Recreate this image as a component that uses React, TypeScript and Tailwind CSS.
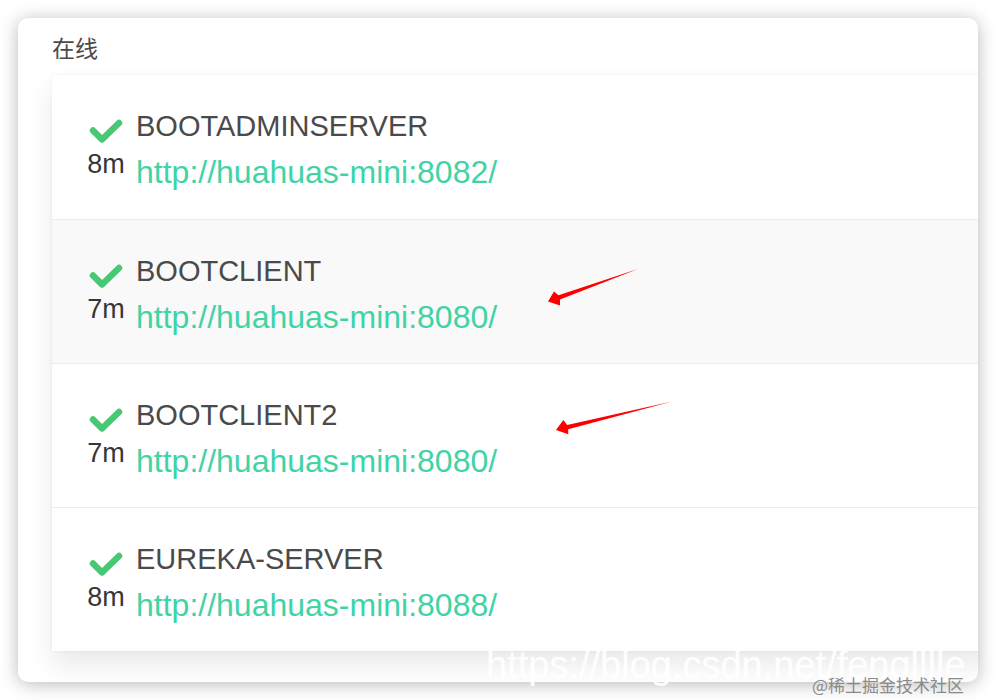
import React from 'react';

interface Instance {
  name: string;
  uptime: string;
  url: string;
}

const instances: Instance[] = [
  { name: 'BOOTADMINSERVER', uptime: '8m', url: 'http://huahuas-mini:8082/' },
  { name: 'BOOTCLIENT', uptime: '7m', url: 'http://huahuas-mini:8080/' },
  { name: 'BOOTCLIENT2', uptime: '7m', url: 'http://huahuas-mini:8080/' },
  { name: 'EUREKA-SERVER', uptime: '8m', url: 'http://huahuas-mini:8088/' },
];

const CheckIcon = () => (
  <svg width="36" height="28" viewBox="0 0 36 28" className="block">
    <polyline
      points="5,12.5 14,21.5 31,5"
      fill="none"
      stroke="#48c774"
      strokeWidth="6.5"
      strokeLinecap="round"
      strokeLinejoin="round"
    />
  </svg>
);

const InstanceRow: React.FC<{ item: Instance; highlighted: boolean; first: boolean }> = ({ item, highlighted, first }) => (
  <div
    className={`flex h-[144px] pl-[34px] pt-[33px] ${first ? '' : 'border-t border-[#ededed]'} ${highlighted ? 'bg-[#f9f9f9]' : 'bg-white'}`}
  >
    <div className="w-[40px] flex flex-col items-center pt-[10px]">
      <CheckIcon />
      <span className="text-[27px] leading-[30px] text-[#363636] mt-[3px]">{item.uptime}</span>
    </div>
    <div className="ml-[10px] flex flex-col">
      <span className="text-[29px] leading-[36px] text-[#4a4a4a]">{item.name}</span>
      <a className="text-[32px] leading-[40px] text-[#42d3a5] mt-[8px]">{item.url}</a>
    </div>
  </div>
);

export default function App() {
  return (
    <div className="relative w-[996px] h-[700px] bg-white overflow-hidden pt-[18px] pl-[18px] font-['Liberation_Sans','Noto_Sans_CJK_SC',sans-serif]">
      <div className="w-[960px] h-[664px] rounded-[10px] bg-white overflow-hidden shadow-[0_2px_18px_rgba(0,0,0,0.28)] pl-[34px] pt-[14px]">
        <div className="text-[23px] leading-[30px] text-[#4a4a4a] font-['Noto_Sans_CJK_SC',sans-serif]">在线</div>
        <div className="mt-[13px] w-[940px] bg-white shadow-[0_14px_26px_rgba(0,0,0,0.09),0_0_3px_rgba(0,0,0,0.06)]">
          {instances.map((item, i) => (
            <InstanceRow key={item.name} item={item} highlighted={i === 1} first={i === 0} />
          ))}
        </div>
      </div>

      {/* annotation arrows */}
      <svg className="absolute left-0 top-0 pointer-events-none" width="996" height="700">
        <polygon points="548,301.5 554,291.5 558.5,295.3 638,269 560,299.5 560,305.5" fill="#ff0000" />
        <polygon points="556,430 563.3,420 567.2,425 672,401.5 568.2,429.2 568.3,434.3" fill="#ff0000" />
      </svg>

      {/* watermarks */}
      <div className="absolute left-[486px] top-[643px] text-[38px] leading-[44px] text-white/90 whitespace-nowrap pointer-events-none">
        https://blog.csdn.net/fenglllle
      </div>
      <div className="absolute left-[812px] top-[674px] text-[17px] leading-[22px] text-[#8a8a8a] whitespace-nowrap font-['Noto_Sans_CJK_SC',sans-serif]">
        @稀土掘金技术社区
      </div>
    </div>
  );
}
